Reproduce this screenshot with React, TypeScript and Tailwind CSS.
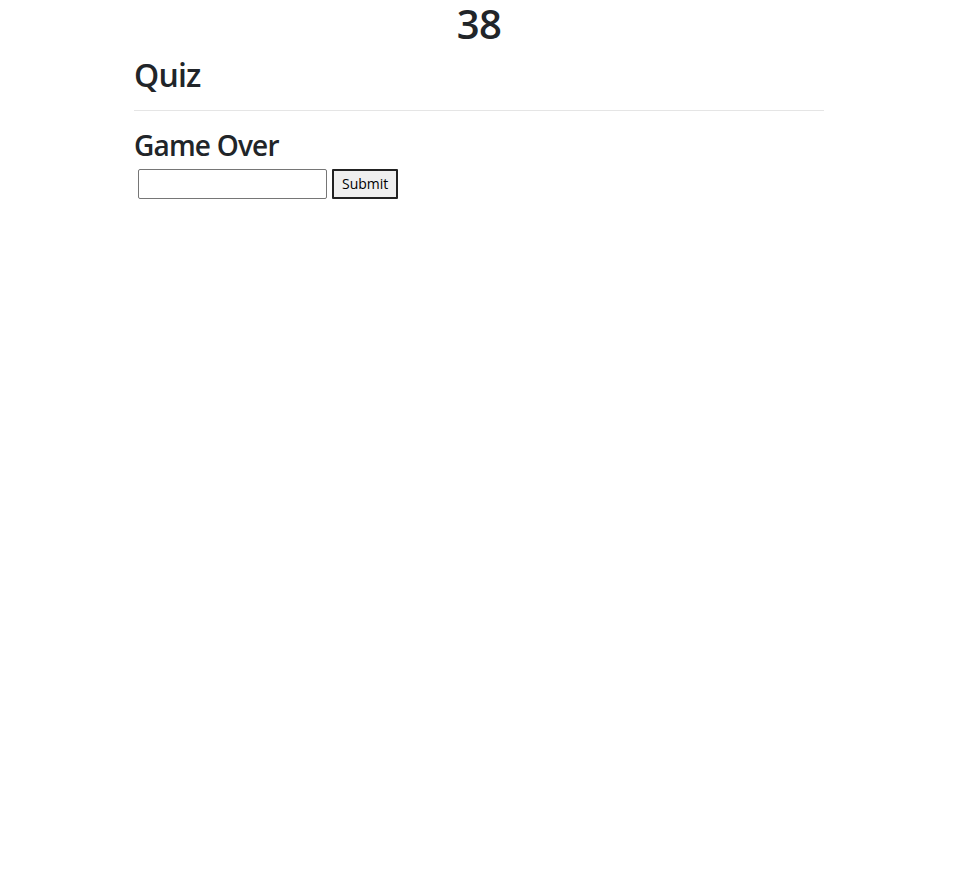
export default function App() {
  return (
    <div className="min-h-screen bg-white text-[#212529] font-['Open_Sans',sans-serif]">
      <div className="mx-auto w-[720px] px-[15px]">
        <h1 className="mb-2 text-center text-[40px] font-semibold leading-[1.2] tracking-[-0.5px]">38</h1>
        <h2 className="mb-2 text-[32px] font-semibold leading-[1.2] tracking-[-0.8px]">Quiz</h2>
        <hr className="my-4 border-0 border-t border-[rgba(0,0,0,0.1)]" />
        <h3 className="mb-[6px] pt-[2px] text-[28px] font-semibold leading-[1.2] tracking-[-0.8px]">Game Over</h3>
        <form className="flex items-center gap-[5px] pl-1" onSubmit={(e) => e.preventDefault()}>
          <input
            type="text"
            className="h-[30px] w-[189px] rounded-[2px] border border-[#767676] bg-white px-1 text-[13px] text-black"
          />
          <button
            type="submit"
            className="h-[30px] rounded-[1px] border-2 border-[#222] bg-[#efefef] px-[8px] text-[14px] text-black"
          >
            Submit
          </button>
        </form>
      </div>
    </div>
  );
}
